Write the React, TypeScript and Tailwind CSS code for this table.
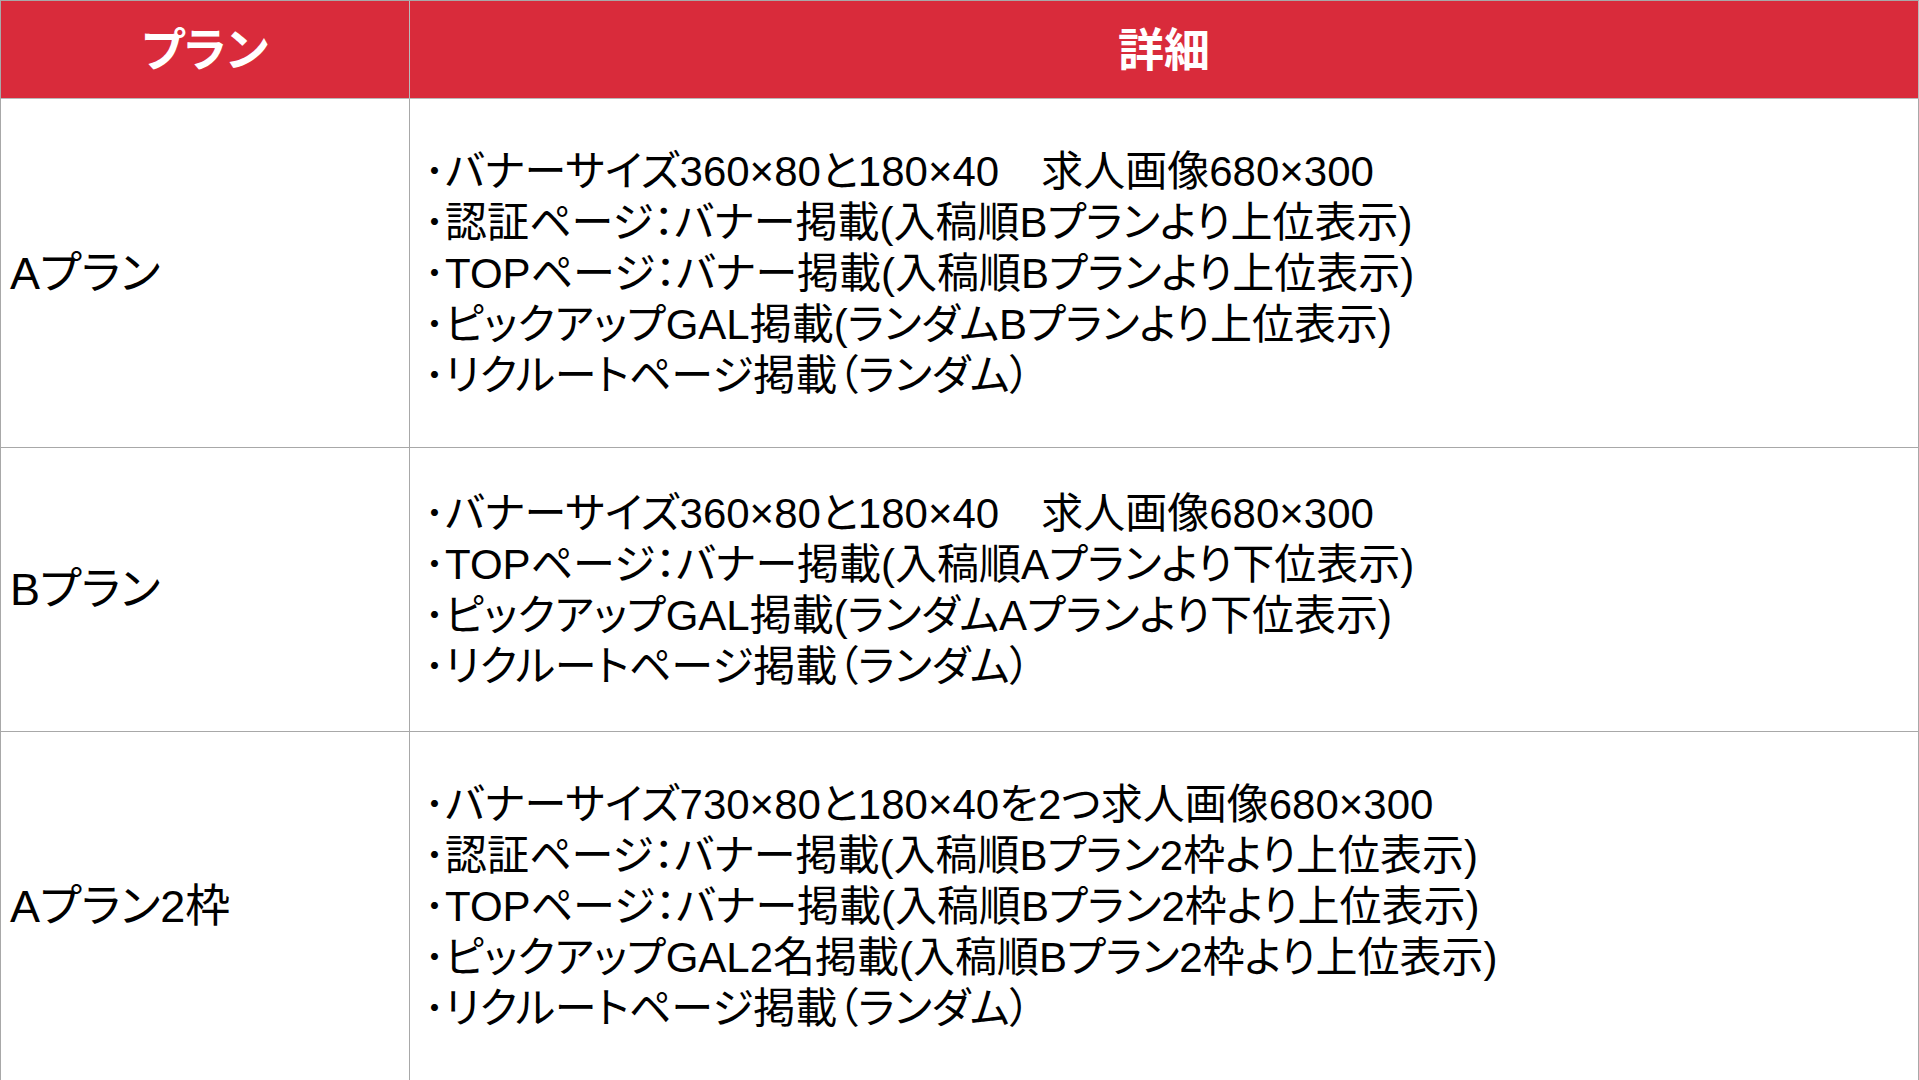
import React from 'react';

const plans = [
  {
    name: 'Aプラン',
    height: 'h-[349px]',
    lines: [
      '･バナーサイズ360×80と180×40　求人画像680×300',
      '･認証ページ：バナー掲載(入稿順Bプランより上位表示)',
      '･TOPページ：バナー掲載(入稿順Bプランより上位表示)',
      '･ピックアップGAL掲載(ランダムBプランより上位表示)',
      '･リクルートページ掲載（ランダム）',
    ],
  },
  {
    name: 'Bプラン',
    height: 'h-[284px]',
    lines: [
      '･バナーサイズ360×80と180×40　求人画像680×300',
      '･TOPページ：バナー掲載(入稿順Aプランより下位表示)',
      '･ピックアップGAL掲載(ランダムAプランより下位表示)',
      '･リクルートページ掲載（ランダム）',
    ],
  },
  {
    name: 'Aプラン2枠',
    height: 'h-[349px]',
    lines: [
      '･バナーサイズ730×80と180×40を2つ求人画像680×300',
      '･認証ページ：バナー掲載(入稿順Bプラン2枠より上位表示)',
      '･TOPページ：バナー掲載(入稿順Bプラン2枠より上位表示)',
      '･ピックアップGAL2名掲載(入稿順Bプラン2枠より上位表示)',
      '･リクルートページ掲載（ランダム）',
    ],
  },
];

export default function App() {
  return (
    <div
      className="w-[1919px] h-[1080px] overflow-hidden bg-white text-black [font-feature-settings:'palt']"
      style={{ fontFamily: '"Liberation Sans", "Noto Sans CJK JP", sans-serif' }}
    >
      <div className="grid grid-cols-[409px_1fr] border-t border-l border-[#a8a8a8]">
        {/* Header */}
        <div className="h-[98px] bg-[#d92b3b] border-r border-b border-[#b9b9b9] flex items-center justify-center">
          <span className="text-white text-[46px] font-bold leading-none">プラン</span>
        </div>
        <div className="h-[98px] bg-[#d92b3b] border-r border-b border-[#b9b9b9] flex items-center justify-center">
          <span className="text-white text-[46px] font-bold leading-none">詳細</span>
        </div>

        {plans.map((p) => (
          <React.Fragment key={p.name}>
            <div className={`${p.height} border-r border-b border-[#a8a8a8] flex items-center pl-[9px]`}>
              <span className="text-[45px] leading-none">{p.name}</span>
            </div>
            <div className={`${p.height} border-r border-b border-[#a8a8a8] flex flex-col justify-center pl-[14px]`}>
              {p.lines.map((l, i) => (
                <div key={i} className="text-[42px] leading-[51px] whitespace-nowrap">
                  {l}
                </div>
              ))}
            </div>
          </React.Fragment>
        ))}
      </div>
    </div>
  );
}
